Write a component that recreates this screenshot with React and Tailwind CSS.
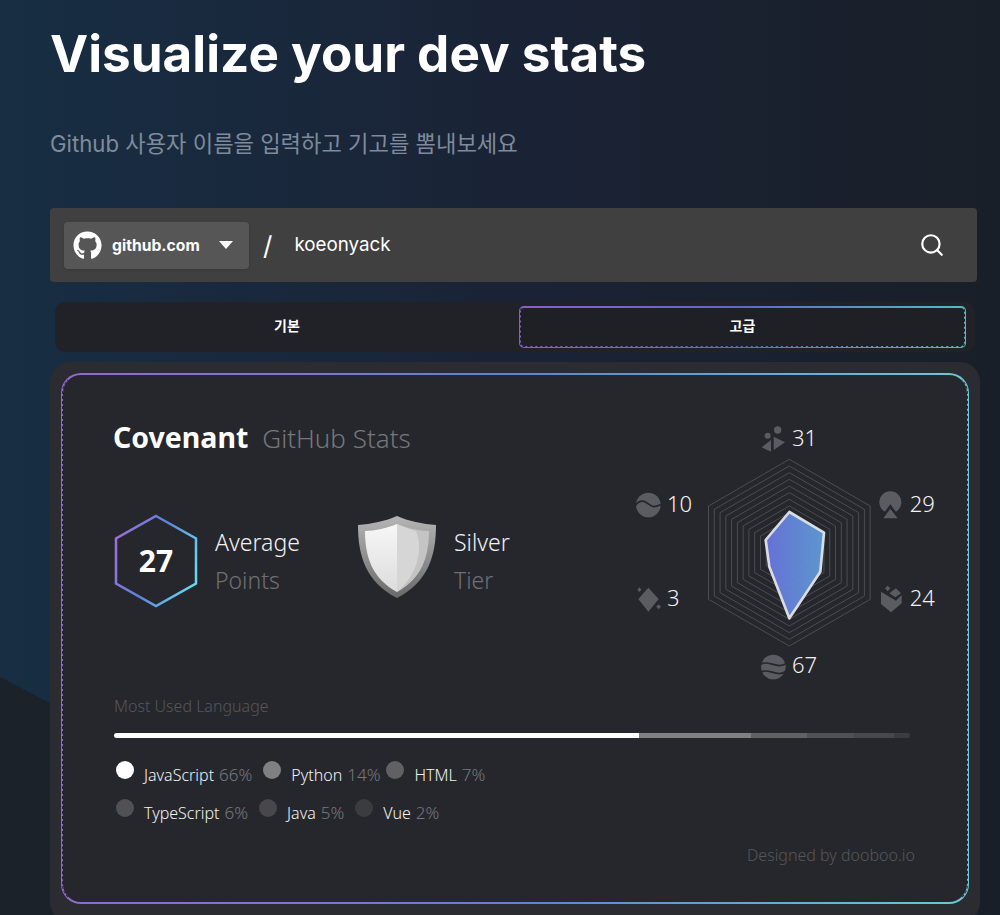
import React from 'react';
import { Search } from 'lucide-react';
import { FaGithub } from 'react-icons/fa';

const LANGS_ROW_1 = [
  { name: 'JavaScript', pct: 66, dot: 'bg-white' },
  { name: 'Python', pct: 14, dot: 'bg-[#808083]', pull: '-mr-[5px]' },
  { name: 'HTML', pct: 7, dot: 'bg-[#616164]' },
];
const LANGS_ROW_2 = [
  { name: 'TypeScript', pct: 6, dot: 'bg-[#515155]' },
  { name: 'Java', pct: 5, dot: 'bg-[#47474c]' },
  { name: 'Vue', pct: 2, dot: 'bg-[#3b3c40]' },
];
const BAR = [
  { w: 66, c: 'bg-white' },
  { w: 14, c: 'bg-[#808083]' },
  { w: 7, c: 'bg-[#616164]' },
  { w: 6, c: 'bg-[#515155]' },
  { w: 5, c: 'bg-[#47474c]' },
  { w: 2, c: 'bg-[#3b3c40]' },
];

// radar rings, radius in the 3x coordinates of the chart
const RINGS = [280, 260, 240, 220, 200, 180, 160, 140, 120, 100, 80, 60];
const hexPoints = (r) => {
  const cx = 505;
  const cy = 413;
  return [0, 60, 120, 180, 240, 300]
    .map((a) => {
      const t = (a * Math.PI) / 180;
      return `${(cx + r * Math.sin(t)).toFixed(1)},${(cy - r * Math.cos(t)).toFixed(1)}`;
    })
    .join(' ');
};

const Radar = () => (
  <svg viewBox="0 0 990 825" className="w-[330px] h-[275px] shrink-0">
    <defs>
      <linearGradient id="radarFill" x1="0" x2="1" y1="0" y2="0">
        <stop offset="0" stopColor="#6a74de" />
        <stop offset="1" stopColor="#5f9cd6" />
      </linearGradient>
    </defs>
    {RINGS.map((r) => (
      <polygon key={r} points={hexPoints(r)} fill="none" stroke="#4c4d52" strokeWidth="3" />
    ))}
    <polygon
      points="505,291 609,353 598,470 505,610 445,455 434,375"
      fill="url(#radarFill)"
      fillOpacity="0.95"
      stroke="#d8dce3"
      strokeWidth="8"
      strokeLinejoin="round"
    />

    <g fill="#5b5c61">
      {/* top */}
      <circle cx="470" cy="45" r="11" />
      <circle cx="440" cy="62" r="9" />
      <polygon points="458,65 492,82 458,105" />
      <polygon points="422,97 450,75 450,110" />
      {/* upper right */}
      <circle cx="808" cy="262" r="33" />
      <polygon points="775,312 841,312 808,268" fill="#26272c" />
      <polygon points="787,310 830,310 808,281" />
      {/* lower right */}
      <polygon points="780,530 825,557 842,540 842,565 810,592 780,567" />
      <polygon points="805,535 825,520 840,535 823,547" />
      <polygon points="800,512 808,520 800,529 792,520" />
      {/* bottom */}
      <circle cx="457" cy="756" r="37" />
      {/* upper left */}
      <circle cx="82" cy="270" r="37" />
      {/* lower left */}
      <polygon points="82,518 113,552 82,590 52,552" />
      <polygon points="55,517 61,524 55,531 49,524" />
      <polygon points="113,568 120,575 113,583 106,575" />
    </g>
    <g fill="none" stroke="#26272c" strokeWidth="5">
      <path d="M418 748 C440 732 470 765 496 745" />
      <path d="M418 772 C440 756 470 790 496 768" />
      <path d="M44 270 C60 248 75 262 90 272 C100 280 112 272 122 268" />
    </g>

    <g fill="#f2f2f2" fontFamily="'Noto Sans', sans-serif" fontWeight="300" fontSize="66">
      <text x="513" y="92">31</text>
      <text x="138" y="291">10</text>
      <text x="866" y="291">29</text>
      <text x="138" y="573">3</text>
      <text x="866" y="573">24</text>
      <text x="513" y="775">67</text>
    </g>
  </svg>
);

const Hexagon = () => (
  <div className="relative w-[84px] h-[94px] flex items-center justify-center shrink-0">
    <svg viewBox="0 0 84 94" className="absolute inset-0 w-full h-full">
      <defs>
        <linearGradient id="hexStroke" x1="0" x2="1" y1="0.2" y2="0.6">
          <stop offset="0" stopColor="#a06fd8" />
          <stop offset="0.5" stopColor="#5b84dc" />
          <stop offset="1" stopColor="#68d5ee" />
        </linearGradient>
      </defs>
      <polygon
        points="42,2 82,24.5 82,69.5 42,92 2,69.5 2,24.5"
        fill="none"
        stroke="url(#hexStroke)"
        strokeWidth="2.5"
      />
    </svg>
    <span className="relative text-[30px] font-bold text-white leading-none">27</span>
  </div>
);

const Shield = () => (
  <svg viewBox="0 0 78 82" className="w-[78px] h-[82px] shrink-0 mb-[9px]">
    <defs>
      <linearGradient id="shieldEdge" x1="0" x2="0" y1="0" y2="1">
        <stop offset="0" stopColor="#b5b5b5" />
        <stop offset="1" stopColor="#6a6a6a" />
      </linearGradient>
      <linearGradient id="shieldLeft" x1="0" x2="0" y1="0" y2="1">
        <stop offset="0" stopColor="#f7f7f7" />
        <stop offset="1" stopColor="#dcdcdc" />
      </linearGradient>
    </defs>
    <path d="M39 0 C28 5 13 8 0 9 C0 40 8 66 39 82 C70 66 78 40 78 9 C65 8 50 5 39 0Z" fill="url(#shieldEdge)" />
    <path d="M39 8 C29 12 17 15 7 15 C7 42 15 63 39 76Z" fill="url(#shieldLeft)" />
    <path d="M39 8 C49 12 61 15 71 15 C71 42 63 63 39 76Z" fill="#c4c4c4" />
    <path d="M39 8 C49 12 54 14 58 15 C66 36 58 60 39 76Z" fill="#d6d6d6" />
  </svg>
);

const Legend = ({ items }) => (
  <div className="flex items-start gap-[9px] h-[38px]">
    {items.map((l) => (
      <div key={l.name} className={`flex items-start ${l.pull || ''}`}>
        <span className={`w-[18px] h-[18px] rounded-full ${l.dot} mr-[10px] ml-[2px]`} />
        <span className="text-[16px] font-light text-[#f2f2f2] leading-[28px]">{l.name}</span>
        <span className="text-[17px] font-light text-[#76777b] leading-[28px] ml-[5px]">{l.pct}%</span>
      </div>
    ))}
  </div>
);

const App = () => {
  return (
    <div className="relative w-[1000px] h-[915px] overflow-hidden bg-linear-to-r from-[#172e43] via-[#1a2336] to-[#191f28] font-['Inter',sans-serif]">
      {/* darker wedge at the bottom left */}
      <div className="absolute inset-0 bg-[#1b2229] [clip-path:polygon(0_677px,100%_1200px,0_1200px)]" />

      <div className="relative pl-[50px]">
        <h1 className="pt-[21px] text-[51.2px] leading-[64px] font-bold text-white">Visualize your dev stats</h1>
        <p className="mt-[43px] text-[22.2px] leading-[32px] text-[#7f8b9a] font-['Inter','Noto_Sans_CJK_KR',sans-serif]">
          Github 사용자 이름을 입력하고 기고를 뽐내보세요
        </p>

        {/* search bar */}
        <div className="mt-[48px] w-[927px] h-[74px] rounded-[4px] bg-[#404040] flex items-center pl-[14px] pr-[32px]">
          <div className="w-[185px] h-[47px] rounded-[4px] bg-[#565656] shadow-sm flex items-center pl-[9px]">
            <FaGithub className="text-white w-[29px] h-[29px]" />
            <span className="ml-[10px] pt-px text-[15.7px] font-bold text-white">github.com</span>
            <span className="ml-[19px] w-0 h-0 border-x-[7px] border-x-transparent border-t-[8px] border-t-white" />
          </div>
          <span className="ml-[14px] text-[26px] text-white">/</span>
          <span className="ml-[22px] pt-px text-[18.8px] text-white flex-1">koeonyack</span>
          <Search className="text-white w-[26px] h-[26px]" strokeWidth={2} />
        </div>

        {/* tabs */}
        <div className="mt-[20px] ml-[5px] w-[920px] h-[50px] rounded-[10px] bg-[#212228] flex items-center pr-[9px] font-['Inter','Noto_Sans_CJK_KR',sans-serif]">
          <div className="w-[464px] pb-[4px] text-center text-[14px] font-bold text-white">기본</div>
          <div className="flex-1 h-[42px] rounded-[5px] p-px bg-linear-to-r from-[#8a5fc4] via-[#5a6bc0] to-[#58b8c4]">
            <div className="h-full pb-[4px] rounded-[4px] border border-dashed border-[#1f2026] border-t-transparent bg-[#1f2026] bg-clip-padding flex items-center justify-center text-[14px] font-bold text-white">
              고급
            </div>
          </div>
        </div>

        {/* card */}
        <div className="mt-[10px] w-[930px] h-[560px] rounded-[20px] bg-[#2b2c32] p-[11px] font-['Noto_Sans',sans-serif]">
          <div className="w-[908px] h-[531px] rounded-[20px] p-px bg-linear-to-r from-[#9468cc] via-[#5f82cc] to-[#6cc8d8]">
            <div className="h-full rounded-[19px] border border-dashed border-[#26272c] border-y-transparent border-y-solid bg-[#26272c] bg-clip-padding pl-[51px] pr-[56px]">
              <div className="flex justify-between h-[316px]">
                <div className="pt-[42px]">
                  <div className="flex items-baseline -ml-px">
                    <span className="text-[28.5px] leading-[40px] font-bold text-white">Covenant</span>
                    <span className="ml-[14px] text-[26px] leading-[40px] font-light text-[#75767a]">GitHub Stats</span>
                  </div>
                  <div className="mt-[56px] flex items-center">
                    <Hexagon />
                    <div className="ml-[17px] w-[143px] text-[23px] leading-[38px] font-light">
                      <div className="text-[#f2f2f2]">Average</div>
                      <div className="text-[#6f7074]">Points</div>
                    </div>
                    <Shield />
                    <div className="ml-[18px] text-[23px] leading-[38px] font-light">
                      <div className="text-[#f2f2f2]">Silver</div>
                      <div className="text-[#6f7074]">Tier</div>
                    </div>
                  </div>
                </div>
                <div className="pt-[40px] -mr-[40px]">
                  <Radar />
                </div>
              </div>

              <div className="mt-[3px] text-[16px] leading-[24px] font-light text-[#55565a]">Most Used Language</div>
              <div className="mt-[15px] h-[5px] rounded-full overflow-hidden flex w-[796px]">
                {BAR.map((b) => (
                  <div key={b.w} className={`h-full ${b.c}`} style={{ width: `${b.w}%` }} />
                ))}
              </div>
              <div className="mt-[23px]">
                <Legend items={LANGS_ROW_1} />
                <Legend items={LANGS_ROW_2} />
              </div>
              <div className="mt-[6px] w-[801px] text-right text-[16px] leading-[24px] font-light text-[#55565a]">
                Designed by dooboo.io
              </div>
            </div>
          </div>
        </div>
      </div>
    </div>
  );
};

export default App;
